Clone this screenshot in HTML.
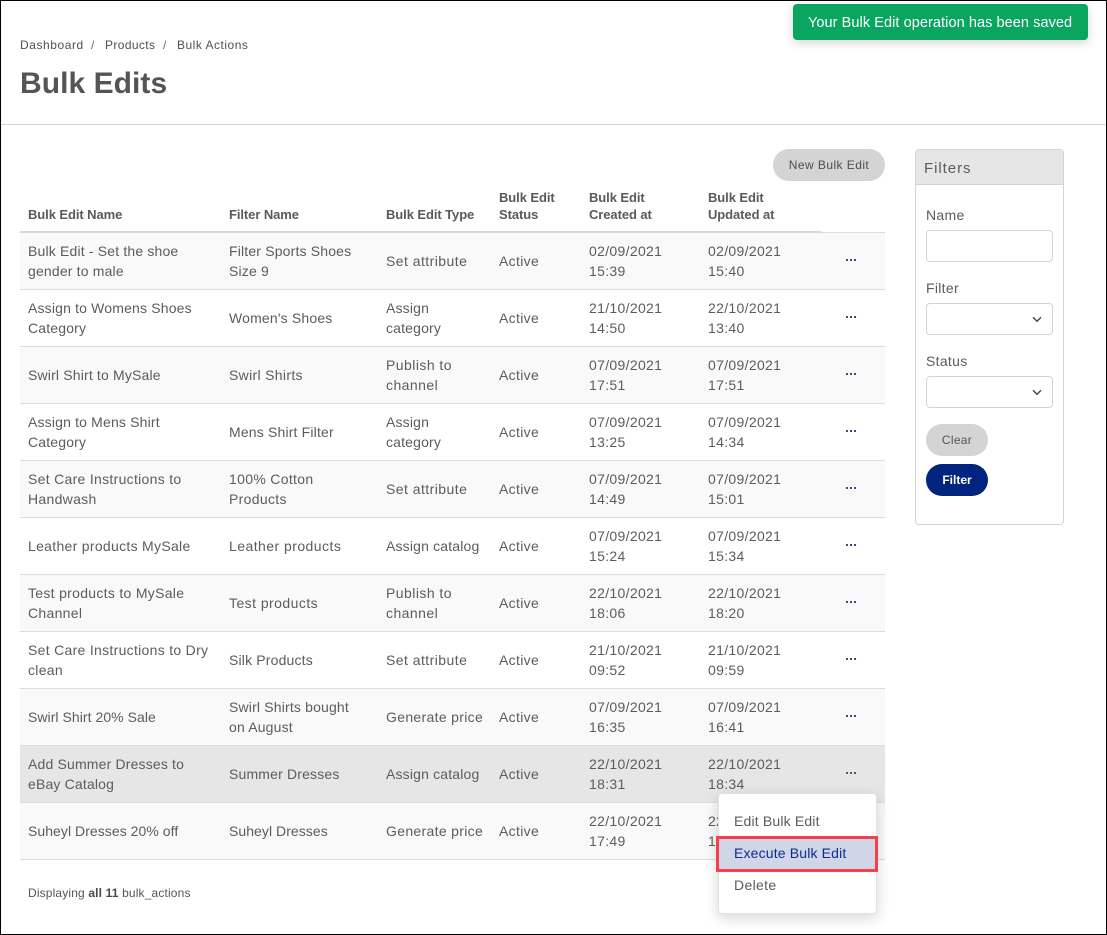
<!DOCTYPE html>
<html><head><meta charset="utf-8"><title>Bulk Edits</title>
<style>
*{box-sizing:border-box}
html,body{margin:0;padding:0}
body{width:1107px;height:935px;position:relative;overflow:hidden;background:#fff;font-family:"Liberation Sans",sans-serif;color:#555;font-size:14px}
#frame{position:absolute;left:0;top:0;width:1107px;height:935px;border:1px solid #000;pointer-events:none;z-index:50}
.a{position:absolute;white-space:nowrap}
table{position:absolute;left:20px;top:189px;width:865px;border-collapse:collapse;table-layout:fixed;letter-spacing:.17px}
th{font-size:13px;font-weight:bold;text-align:left;vertical-align:bottom;padding:0 8px 9px;line-height:17px;height:43px;color:#5a5a5a;letter-spacing:-.08px}
td{height:57px;padding:0 8px;line-height:20px;border-bottom:1px solid #dcdcdc;color:#5c5c5c;white-space:nowrap}
td.d{letter-spacing:.32px}
td.w{letter-spacing:.45px}
td.m{letter-spacing:.3px}
td.n{letter-spacing:.05px}
tr.s td{background:#f9f9f9}
tr.h td{background:#e6e6e6}
tr.f td{padding-top:1px}
.btn{position:absolute;border-radius:16px;text-align:center;font-size:12px;height:32px;line-height:32px;letter-spacing:.3px}
.inp{position:absolute;left:926px;width:127px;height:32px;border:1px solid #d4d4d4;border-radius:4px;background:#fff}
.lbl{position:absolute;left:926px;font-size:14px;line-height:18px;color:#5c5c5c;letter-spacing:.3px}
</style></head><body>
<div id="frame"></div>

<div class="a" style="left:20px;top:38px;font-size:12px;line-height:15px;color:#505050;letter-spacing:.56px">Dashboard</div>
<div class="a" style="left:91px;top:38px;font-size:12px;line-height:15px;color:#666">/</div>
<div class="a" style="left:105px;top:38px;font-size:12px;line-height:15px;color:#505050;letter-spacing:.38px">Products</div>
<div class="a" style="left:163px;top:38px;font-size:12px;line-height:15px;color:#666">/</div>
<div class="a" style="left:177px;top:38px;font-size:12px;line-height:15px;color:#505050;letter-spacing:.5px">Bulk Actions</div>
<div class="a" style="left:20px;top:66px;font-size:30px;line-height:35px;font-weight:bold;color:#555;letter-spacing:.05px">Bulk Edits</div>
<div class="a" style="left:1px;top:124px;width:1105px;height:1px;background:#d5d5d5"></div>

<div class="a" style="left:793px;top:4px;width:295px;height:36px;background:#0aa55f;border-radius:4px;box-shadow:0 3px 10px rgba(0,0,0,.16);color:#fff;font-size:14.5px;line-height:38px;padding-left:15px;letter-spacing:.07px">Your Bulk Edit operation has been saved</div>

<div class="btn" style="left:773px;top:149px;width:112px;background:#d4d4d4;color:#4d4d4d;letter-spacing:.44px">New Bulk Edit</div>

<table>
<colgroup><col style="width:201px"><col style="width:157px"><col style="width:113px"><col style="width:90px"><col style="width:119px"><col style="width:121px"><col style="width:64px"></colgroup>
<thead><tr><th>Bulk Edit Name</th><th>Filter Name</th><th>Bulk Edit Type</th><th>Bulk Edit<br>Status</th><th>Bulk Edit<br>Created at</th><th>Bulk Edit<br>Updated at</th><th></th></tr></thead>
<tbody>
<tr class="s f"><td>Bulk Edit - Set the shoe<br>gender to male</td><td>Filter Sports Shoes<br>Size 9</td><td class="w">Set attribute</td><td class="d">Active</td><td class="d">02/09/2021<br>15:39</td><td class="d">02/09/2021<br>15:40</td><td></td></tr>
<tr><td>Assign to Womens Shoes<br>Category</td><td>Women's Shoes</td><td>Assign<br>category</td><td class="d">Active</td><td class="d">21/10/2021<br>14:50</td><td class="d">22/10/2021<br>13:40</td><td></td></tr>
<tr class="s"><td>Swirl Shirt to MySale</td><td class="d">Swirl Shirts</td><td class="w">Publish to<br>channel</td><td class="d">Active</td><td class="d">07/09/2021<br>17:51</td><td class="d">07/09/2021<br>17:51</td><td></td></tr>
<tr><td>Assign to Mens Shirt<br>Category</td><td>Mens Shirt Filter</td><td>Assign<br>category</td><td class="d">Active</td><td class="d">07/09/2021<br>13:25</td><td class="d">07/09/2021<br>14:34</td><td></td></tr>
<tr class="s"><td class="m">Set Care Instructions to<br>Handwash</td><td class="d">100% Cotton<br>Products</td><td class="w">Set attribute</td><td class="d">Active</td><td class="d">07/09/2021<br>14:49</td><td class="d">07/09/2021<br>15:01</td><td></td></tr>
<tr><td class="m">Leather products MySale</td><td class="w">Leather products</td><td>Assign catalog</td><td class="d">Active</td><td class="d">07/09/2021<br>15:24</td><td class="d">07/09/2021<br>15:34</td><td></td></tr>
<tr class="s"><td class="m">Test products to MySale<br>Channel</td><td class="w">Test products</td><td class="w">Publish to<br>channel</td><td class="d">Active</td><td class="d">22/10/2021<br>18:06</td><td class="d">22/10/2021<br>18:20</td><td></td></tr>
<tr><td class="m">Set Care Instructions to Dry<br>clean</td><td>Silk Products</td><td class="w">Set attribute</td><td class="d">Active</td><td class="d">21/10/2021<br>09:52</td><td class="d">21/10/2021<br>09:59</td><td></td></tr>
<tr class="s"><td class="n">Swirl Shirt 20% Sale</td><td>Swirl Shirts bought<br>on August</td><td class="d">Generate price</td><td class="d">Active</td><td class="d">07/09/2021<br>16:35</td><td class="d">07/09/2021<br>16:41</td><td></td></tr>
<tr class="h"><td>Add Summer Dresses to<br>eBay Catalog</td><td>Summer Dresses</td><td>Assign catalog</td><td class="d">Active</td><td class="d">22/10/2021<br>18:31</td><td class="d">22/10/2021<br>18:34</td><td></td></tr>
<tr class="s"><td class="n">Suheyl Dresses 20% off</td><td class="n">Suheyl Dresses</td><td class="d">Generate price</td><td class="d">Active</td><td class="d">22/10/2021<br>17:49</td><td class="d">22/10/2021<br>17:55</td><td></td></tr>
</tbody></table>

<div class="a" style="left:20px;top:231px;width:801px;height:2px;background:#d8d8d8"></div>
<div class="a" style="left:821px;top:232px;width:64px;height:1px;background:#dcdcdc"></div>

<svg class="a" style="left:845px;top:230px" width="12" height="600" viewBox="0 0 12 600">
<g fill="#3a4a80">
<rect x="1" y="29" width="2" height="2"/><rect x="5" y="29" width="2" height="2"/><rect x="9" y="29" width="2" height="2"/>
<rect x="1" y="86" width="2" height="2"/><rect x="5" y="86" width="2" height="2"/><rect x="9" y="86" width="2" height="2"/>
<rect x="1" y="143" width="2" height="2"/><rect x="5" y="143" width="2" height="2"/><rect x="9" y="143" width="2" height="2"/>
<rect x="1" y="200" width="2" height="2"/><rect x="5" y="200" width="2" height="2"/><rect x="9" y="200" width="2" height="2"/>
<rect x="1" y="257" width="2" height="2"/><rect x="5" y="257" width="2" height="2"/><rect x="9" y="257" width="2" height="2"/>
<rect x="1" y="314" width="2" height="2"/><rect x="5" y="314" width="2" height="2"/><rect x="9" y="314" width="2" height="2"/>
<rect x="1" y="371" width="2" height="2"/><rect x="5" y="371" width="2" height="2"/><rect x="9" y="371" width="2" height="2"/>
<rect x="1" y="428" width="2" height="2"/><rect x="5" y="428" width="2" height="2"/><rect x="9" y="428" width="2" height="2"/>
<rect x="1" y="485" width="2" height="2"/><rect x="5" y="485" width="2" height="2"/><rect x="9" y="485" width="2" height="2"/>
</g>
<g fill="#555">
<rect x="1" y="542" width="2" height="2"/><rect x="5" y="542" width="2" height="2"/><rect x="9" y="542" width="2" height="2"/>
</g>
</svg>

<div class="a" style="left:28px;top:885px;font-size:12px;line-height:16px;color:#555;letter-spacing:.15px">Displaying <b style="font-weight:bold;color:#4a4a4a">all 11</b> bulk_actions</div>

<div class="a" style="left:718px;top:793px;width:159px;height:121px;background:#fff;border:1px solid #e2e2e2;border-radius:4px;box-shadow:0 4px 14px rgba(0,0,0,.16)"></div>
<div class="a" style="left:734px;top:811px;line-height:20px;color:#5c5c5c;letter-spacing:.17px">Edit Bulk Edit</div>
<div class="a" style="left:716px;top:836px;width:162px;height:36px;background:#d0d5e8;border:3px solid #f5404a"></div>
<div class="a" style="left:734px;top:843px;line-height:20px;color:#0f2b8f;letter-spacing:.16px">Execute Bulk Edit</div>
<div class="a" style="left:734px;top:875px;line-height:20px;color:#5c5c5c;letter-spacing:.34px">Delete</div>

<div class="a" style="left:915px;top:149px;width:149px;height:376px;border:1px solid #d4d4d4;border-radius:4px;background:#fff"></div>
<div class="a" style="left:916px;top:150px;width:147px;height:35px;background:#e6e6e6;border-bottom:1px solid #d4d4d4;border-radius:3px 3px 0 0;font-size:15px;line-height:37px;padding-left:8px;color:#5c5c5c;letter-spacing:.95px">Filters</div>
<div class="lbl" style="top:206px">Name</div>
<div class="inp" style="top:230px"></div>
<div class="lbl" style="top:279px">Filter</div>
<div class="inp" style="top:303px"></div>
<svg class="a" style="left:1032px;top:316px" width="10" height="7" viewBox="0 0 10 7"><path d="M1 1.2 L5 5.2 L9 1.2" fill="none" stroke="#444" stroke-width="1.4"/></svg>
<div class="lbl" style="top:352px">Status</div>
<div class="inp" style="top:376px"></div>
<svg class="a" style="left:1032px;top:389px" width="10" height="7" viewBox="0 0 10 7"><path d="M1 1.2 L5 5.2 L9 1.2" fill="none" stroke="#444" stroke-width="1.4"/></svg>
<div class="btn" style="left:926px;top:424px;width:62px;background:#d4d4d4;color:#555">Clear</div>
<div class="btn" style="left:926px;top:464px;width:62px;background:#00247f;color:#fff;font-weight:bold;letter-spacing:0">Filter</div>
</body></html>
